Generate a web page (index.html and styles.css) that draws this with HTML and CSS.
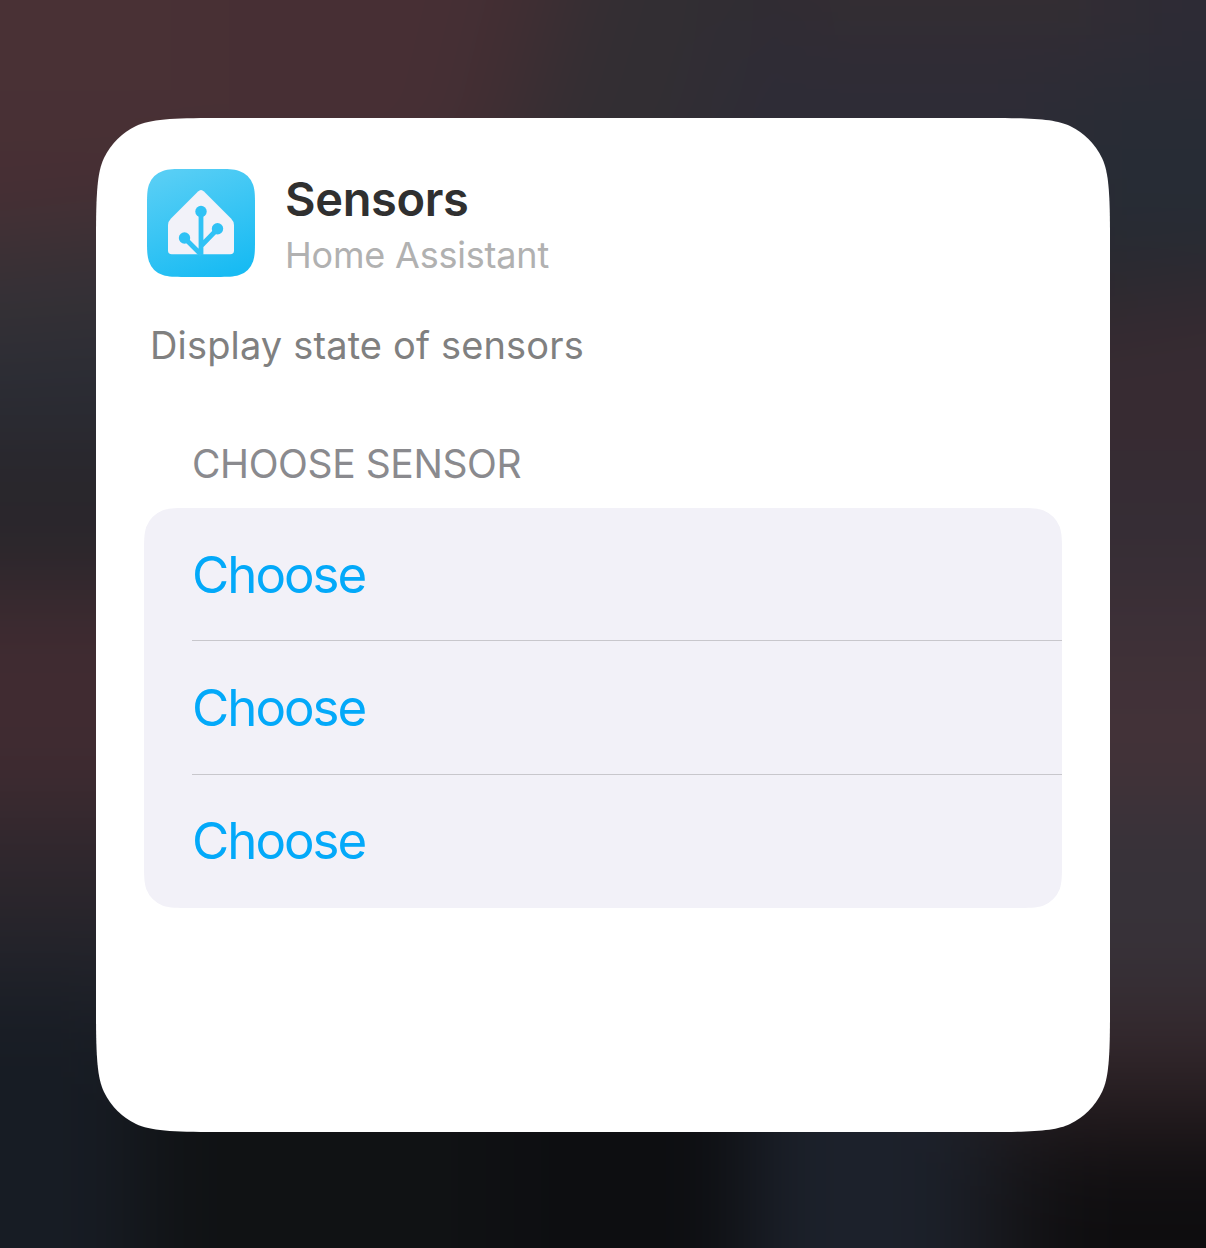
FILE: index.html
```html
<!DOCTYPE html>
<html lang="en">
<head>
<meta charset="utf-8">
<title>Sensors</title>
<link rel="stylesheet" href="styles.css">
</head>
<body>
<svg class="wallpaper" viewBox="0 0 1206 1248" preserveAspectRatio="none" aria-hidden="true">
  <defs><filter id="soft" filterUnits="userSpaceOnUse" x="-200" y="-200" width="1606" height="1648" color-interpolation-filters="sRGB"><feGaussianBlur stdDeviation="44"/></filter></defs>
  <g filter="url(#soft)">
    <rect x="-200" y="-200" width="1606" height="1648" fill="#29272c"/>
    <path fill="#493135" d="M-200-200H200V200H-200z"/>
    <path fill="#472f34" d="M200-200H540L450 200H200z"/>
    <path fill="#402e33" d="M535-200H640L520 200H440z"/>
    <path fill="#322e33" d="M630-200H800L690 200H510z"/>
    <path fill="#2e2c36" d="M740 0H1206V200H680z"/>
    <path fill="#342d32" d="M780-200H1120V35H780z"/>
    <path fill="#2d2b35" d="M1120-200H1406V100H1120z"/>
    <path fill="#272c35" d="M1060 90H1406V260H1060z"/>
    <path fill="#472f34" d="M-200 120H200V220L-200 260z"/>
    <path fill="#353136" d="M-200 260L200 220V330L-200 360z"/>
    <path fill="#2a2c34" d="M-200 360L200 330V440H-200z"/>
    <path fill="#29262b" d="M-200 440H200V590H-200z"/>
    <path fill="#402b31" d="M-200 590H200V805H-200z"/>
    <path fill="#2f272d" d="M-200 805H200V910H-200z"/>
    <path fill="#22232a" d="M-200 910H200V995H-200z"/>
    <path fill="#171c24" d="M-200 995H140V1448H-200z"/>
    <path fill="#372b32" d="M1000 320L1406 265V480H1000z"/>
    <path fill="#352d35" d="M1000 480H1406V580H1000z"/>
    <path fill="#3d3037" d="M1000 580H1406V680H1000z"/>
    <path fill="#433238" d="M1000 680H1406V800H1000z"/>
    <path fill="#373239" d="M1000 800H1406V990H1000z"/>
    <path fill="#35292e" d="M1000 990H1406V1075H1000z"/>
    <path fill="#221a1d" d="M1000 1075H1406V1150H1000z"/>
    <path fill="#101214" d="M140 1050H500V1448H140z"/>
    <path fill="#0d0e11" d="M500 1050H750V1448H500z"/>
    <path fill="#1c212b" d="M750 1050H970V1448H750z"/>
    <path fill="#17171b" d="M970 1120H1050V1448H970z"/>
    <path fill="#0e0d0f" d="M1040 1150H1406V1448H1040z"/>
  </g>
</svg>
<main class="card">
  <header class="header">
    <svg class="app-icon" viewBox="0 0 108 108" aria-hidden="true">
      <defs><linearGradient id="sky" x1=".3" y1="0" x2=".7" y2="1"><stop offset="0" stop-color="#57cef5"/><stop offset="1" stop-color="#18bbf3"/></linearGradient></defs>
      <path fill="url(#sky)" d="M0 38C0 27 0 21.7 1.9 15.8A22 22 0 0 1 15.8 1.9C21.7 0 27 0 38 0H70C81 0 86.300 0 92.200 1.900A22 22 0 0 1 106.100 15.800C108 21.700 108 27 108 38V70C108 81 108 86.300 106.100 92.200A22 22 0 0 1 92.200 106.100C86.300 108 81 108 70 108H38C27 108 21.700 108 15.800 106.100A22 22 0 0 1 1.900 92.200C0 86.300 0 81 0 70z"/>
      <path fill="#f2f2f9" d="M51 22.500Q54 19.500 57 22.500L84 49.500Q87 52.500 87 56V81.500Q87 85.300 83.200 85.300H24.800Q21 85.300 21 81.500V56Q21 52.500 24 49.500z"/>
      <path fill="none" stroke="#30c2f5" stroke-width="4.800" d="M54 43V86M37.500 69L54.500 86M70.500 60L54 77"/>
      <g fill="#30c2f5"><circle cx="54" cy="42.500" r="5.700"/><circle cx="37.500" cy="69" r="5.700"/><circle cx="70.500" cy="59.700" r="5.700"/></g>
    </svg>
    <div class="heading">
      <h1 class="title">Sensors</h1>
      <p class="app-name">Home Assistant</p>
    </div>
  </header>
  <p class="description">Display state of sensors</p>
  <h2 class="section-title">CHOOSE SENSOR</h2>
  <ul class="list">
    <li class="row"><span class="choose">Choose</span></li>
    <li class="row"><span class="choose">Choose</span></li>
    <li class="row"><span class="choose">Choose</span></li>
  </ul>
</main>
</body>
</html>
```
FILE: styles.css
```css
* { box-sizing: border-box; margin: 0; padding: 0; }
body {
  width: 1206px;
  height: 1248px;
  overflow: hidden;
  position: relative;
  padding: 118px 96px;
  background: #29272c;
  font-family: Inter, "Liberation Sans", sans-serif;
}
.wallpaper { position: absolute; inset: 0; width: 100%; height: 100%; }
.card {
  position: relative;
  width: 1014px;
  height: 1014px;
  padding: 51px 48px 0;
  background: #fff;
  clip-path: path("M120 0H894C938 0 960 1.200 974 8A70 70 0 0 1 1006 40C1012.800 54 1014 76 1014 120V894C1014 938 1012.800 960 1006 974A70 70 0 0 1 974 1006C960 1012.800 938 1014 894 1014H120C76 1014 54 1012.800 40 1006A70 70 0 0 1 8 974C1.200 960 0 938 0 894V120C0 76 1.200 54 8 40A70 70 0 0 1 40 8C54 1.200 76 0 120 0Z");
}
.header { display: flex; gap: 30px; height: 108px; padding-left: 3px; }
.app-icon { width: 108px; height: 108px; flex: none; }
.title { margin-top: 1px; font-size: 47px; line-height: 58px; font-weight: 600; letter-spacing: -0.35px; color: #303030; }
.app-name { margin-top: 5px; font-size: 36px; line-height: 44px; letter-spacing: -0.2px; color: #b1b1b1; }
.description { margin: 44px 0 0 6px; font-size: 38px; line-height: 48px; letter-spacing: 0.15px; color: #808080; }
.section-title { margin: 71px 0 0 48px; font-size: 39px; line-height: 48px; font-weight: 400; letter-spacing: -0.4px; color: #8a8a8e; }
.list {
  width: 918px;
  height: 400px;
  margin-top: 20px;
  list-style: none;
  background: #f2f1f8;
  clip-path: path("M45.900 0H872.100C885.300 0 891.900 0 899.100 2.200A30 30 0 0 1 915.800 18.900C918 26.100 918 32.700 918 45.900V354.100C918 367.300 918 373.900 915.800 381.100A30 30 0 0 1 899.100 397.800C891.900 400 885.300 400 872.100 400H45.900C32.700 400 26.100 400 18.900 397.800A30 30 0 0 1 2.200 381.100C0 373.900 0 367.300 0 354.100V45.900C0 32.700 0 26.100 2.200 18.900A30 30 0 0 1 18.900 2.200C26.100 0 32.700 0 45.900 0Z");
}
.row { height: 133px; margin-left: 48px; padding: 36px 0 0; border-bottom: 1px solid #c8c7cc; }
.row + .row { height: 134px; }
.row:last-child { height: 133px; padding-top: 35px; border: 0; }
.choose { display: block; font-size: 51px; line-height: 62px; letter-spacing: -2px; color: #03a9f9; }
```
